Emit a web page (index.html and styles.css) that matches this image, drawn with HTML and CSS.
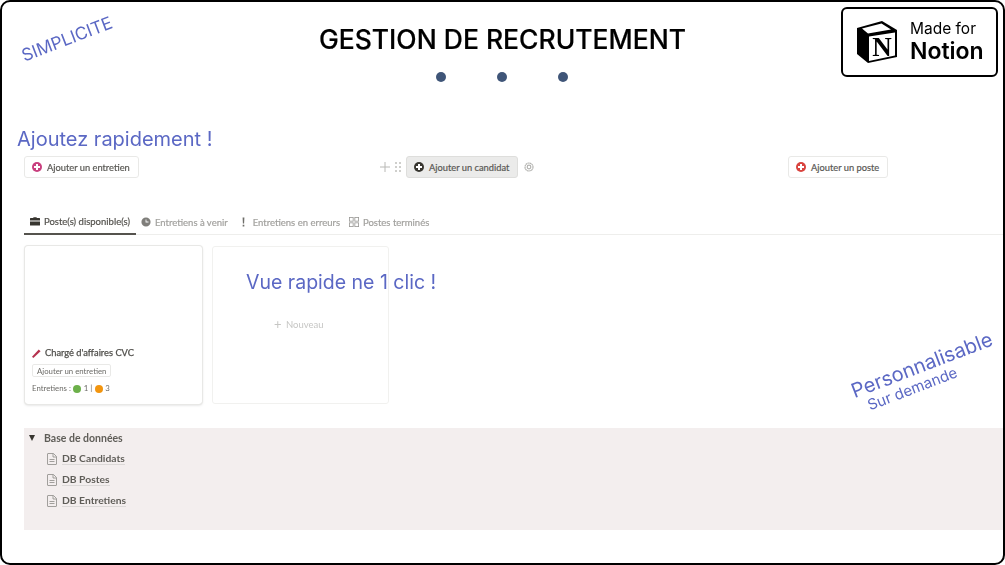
FILE: index.html
```html
<!DOCTYPE html>
<html lang="fr">
<head>
    <meta charset="UTF-8">
    <title>Gestion de recrutement</title>
    <link rel="stylesheet" href="styles.css">
</head>
<body>
    <div class="frame">
        <header class="header">
            <h1 class="title">GESTION DE RECRUTEMENT</h1>
            <div class="dots"><span></span><span></span><span></span></div>
        </header>

        <h2 class="lead">Ajoutez rapidement !</h2>

        <div class="actions">
            <div class="action"><span class="plus plus-pink"></span>Ajouter un entretien</div>
            <div class="action-group">
                <svg class="handle-plus" viewBox="0 0 10 10"><path d="M5 0v10M0 5h10"/></svg>
                <svg class="handle-grip" viewBox="0 0 6 10"><g><rect x="0" y="0" width="2" height="2"/><rect x="4" y="0" width="2" height="2"/><rect x="0" y="4" width="2" height="2"/><rect x="4" y="4" width="2" height="2"/><rect x="0" y="8" width="2" height="2"/><rect x="4" y="8" width="2" height="2"/></g></svg>
                <div class="action action-active"><span class="plus plus-dark"></span>Ajouter un candidat</div>
                <svg class="gear" viewBox="0 0 10 10"><circle cx="5" cy="5" r="4" stroke-dasharray="1.800 .300"/><circle cx="5" cy="5" r="1.800"/></svg>
            </div>
            <div class="action"><span class="plus plus-red"></span>Ajouter un poste</div>
        </div>

        <nav class="tabs">
            <div class="tab tab-active">
                <svg viewBox="0 0 12 11"><path d="M4 2V1h4v1h3.500a.5.5 0 0 1 .5.5V5H0V2.500A.5.5 0 0 1 .5 2zM0 6h12v4.500a.5.5 0 0 1-.5.5H.500a.5.5 0 0 1-.5-.5z"/></svg>
                Poste(s) disponible(s)
            </div>
            <div class="tab tab-next">
                <svg viewBox="0 0 12 12"><path fill-rule="evenodd" d="M6 .500a5.500 5.500 0 1 1 0 11 5.500 5.500 0 0 1 0-11zM5.500 3v3.500H9v-1H6.500V3z"/></svg>
                Entretiens à venir
            </div>
            <div class="tab">
                <svg class="tab-bang" viewBox="0 0 4 12"><path d="M.8 0h2.400l-.4 8H1.200zM.9 9.500h2.200V12H.900z"/></svg>
                Entretiens en erreurs
            </div>
            <div class="tab">
                <svg class="tab-grid" viewBox="0 0 12 12"><rect x=".5" y=".5" width="4.500" height="4.500"/><rect x="7" y=".5" width="4.500" height="4.500"/><rect x=".5" y="7" width="4.500" height="4.500"/><rect x="7" y="7" width="4.500" height="4.500"/></svg>
                Postes terminés
            </div>
        </nav>

        <section class="board">
            <article class="card">
                <div class="card-name">
                    <svg viewBox="0 0 10 10"><path d="M0 8.500 7.500.5l2 2L1.500 10z"/></svg>
                    Chargé d'affaires CVC
                </div>
                <div class="card-button">Ajouter un entretien</div>
                <div class="card-count">Entretiens : <i class="dot-green"></i> 1 | <i class="dot-orange"></i> 3</div>
            </article>
            <div class="card-new"><span class="new-plus">+</span> Nouveau</div>
        </section>

        <section class="database">
            <div class="db-title"><span class="caret"></span>Base de données</div>
            <div class="db-row">
                <svg viewBox="0 0 10 12"><path d="M1 .5h5.500L9.500 3.500V11a.5.5 0 0 1-.5.5H1a.5.5 0 0 1-.5-.5V1A.5.5 0 0 1 1 .5zM6 .8V4h3.300M2.500 6.500h5M2.500 8.500h5"/></svg>
                <span>DB Candidats</span>
            </div>
            <div class="db-row">
                <svg viewBox="0 0 10 12"><path d="M1 .5h5.500L9.500 3.500V11a.5.5 0 0 1-.5.5H1a.5.5 0 0 1-.5-.5V1A.5.5 0 0 1 1 .5zM6 .8V4h3.300M2.500 6.500h5M2.500 8.500h5"/></svg>
                <span>DB Postes</span>
            </div>
            <div class="db-row">
                <svg viewBox="0 0 10 12"><path d="M1 .5h5.500L9.500 3.500V11a.5.5 0 0 1-.5.5H1a.5.5 0 0 1-.5-.5V1A.5.5 0 0 1 1 .5zM6 .8V4h3.300M2.500 6.500h5M2.500 8.500h5"/></svg>
                <span>DB Entretiens</span>
            </div>
        </section>

        <!-- annotations posees sur la capture -->
        <div class="note note-simple">SIMPLICITE</div>
        <div class="note note-quick">Vue rapide ne 1 clic !</div>
        <div class="note note-custom">Personnalisable</div>
        <div class="note note-demand">Sur demande</div>

        <div class="badge">
            <svg class="badge-logo" viewBox="0 0 42 44">
                <path class="cube-dark" d="M1 8 26 1l15 9v27L12 43 1 34z"/>
                <path class="cube-light" d="M6 8.500 25.500 3.500l9.500 6L12 13.500zM13 16.500 39 12.500v23L13 41z"/>
                <text x="26" y="35.500" class="cube-letter">N</text>
            </svg>
            <div class="badge-text">
                <div class="badge-small">Made for</div>
                <div class="badge-big">Notion</div>
            </div>
        </div>
    </div>
</body>
</html>
```

FILE: styles.css
```css
* {
    margin: 0;
    padding: 0;
    box-sizing: border-box;
}

body {
    width: 1005px;
    height: 565px;
    overflow: hidden;
    background: white;
    font-family: 'Lato', 'Open Sans', sans-serif;
    color: #37352f;
}

.frame {
    position: relative;
    width: 1005px;
    height: 565px;
    border: 2px solid black;
    border-radius: 10px;
    overflow: hidden;
    padding-left: 22px;
    filter: blur(0.3px);
}

.header {
    height: 84px;
    padding-top: 19px;
    text-align: center;
    margin-left: -22px;
}

.title {
    font-family: 'Inter', sans-serif;
    font-size: 26.500px;
    font-weight: 500;
    line-height: 37px;
    -webkit-text-stroke: 0.2px;
    color: black;
}

.dots {
    display: flex;
    justify-content: center;
    gap: 51px;
    margin: 14px 0 0 -2px;
}

.dots span {
    width: 10px;
    height: 10px;
    border-radius: 50%;
    background: #3f5578;
}

.lead {
    margin-top: 40px;
    margin-left: -7px;
    font-family: 'Inter', sans-serif;
    font-size: 20px;
    font-weight: 400;
    line-height: 26px;
    color: #5b68c4;
}

.actions {
    display: grid;
    grid-template-columns: 356px 408px auto;
    margin-top: 4px;
    align-items: center;
    height: 22px;
}

.action {
    display: flex;
    align-items: center;
    gap: 5px;
    width: fit-content;
    height: 22px;
    padding: 0 8px 0 7px;
    border: 1px solid #e9e9e7;
    border-radius: 3px;
    font-size: 9.300px;
    -webkit-text-stroke: 0.2px;
    color: #5a5955;
    background: white;
}

.action-active {
    background: #ebebea;
    border-color: #dededc;
    margin-left: 5px;
}

.action-group {
    display: flex;
    align-items: center;
}

.handle-plus {
    width: 10px;
    height: 10px;
    fill: none;
    stroke: #b8b8b5;
    stroke-width: 1;
}

.handle-grip {
    width: 6px;
    height: 10px;
    margin-left: 5px;
    fill: #cfcfcc;
}

.gear {
    width: 10px;
    height: 10px;
    margin-left: 6px;
    fill: none;
    stroke: #b4b4b1;
    stroke-width: 1.200;
}

.plus {
    position: relative;
    width: 10px;
    height: 10px;
    border-radius: 50%;
}

.plus::before,
.plus::after {
    content: "";
    position: absolute;
    background: white;
}

.plus::before {
    left: 2px;
    top: 4px;
    width: 6px;
    height: 2px;
}

.plus::after {
    left: 4px;
    top: 2px;
    width: 2px;
    height: 6px;
}

.plus-pink { background: #c9407f; }
.plus-dark { background: #37352f; }
.plus-red { background: #d9443f; }

.tabs {
    display: flex;
    margin-top: 34px;
    height: 23px;
    border-bottom: 1px solid #eeeeec;
    gap: 4px;
}

.tab {
    display: flex;
    align-items: center;
    gap: 4px;
    height: 23px;
    padding: 0 2px 3px 3px;
    font-size: 9.500px;
    -webkit-text-stroke: 0.2px;
    color: #a2a19e;
}

.tab svg {
    width: 10px;
    height: 10px;
    fill: #7f7e7a;
}

.tab .tab-bang {
    width: 3px;
    margin: 0 4px 0 5px;
    fill: #6f6e6a;
}

.tab .tab-grid {
    fill: none;
    stroke: #9b9a97;
}

.tab-active {
    padding-left: 6px;
    padding-right: 6px;
    color: #55534e;
    border-bottom: 2px solid #55534e;
}

.tab-active svg {
    fill: #37352f;
}

.tab-next {
    padding-left: 1px;
}

.board {
    display: flex;
    gap: 10px;
    margin-top: 11px;
    height: 158px;
    padding-left: 1px;
}

.card {
    width: 177px;
    padding: 101px 7px 0;
    border-radius: 3px;
    box-shadow: 0 0 0 1px #e8e8e6, 0 1px 3px rgba(0, 0, 0, 0.18);
}

.card-name {
    display: flex;
    align-items: center;
    gap: 4px;
    font-size: 9.300px;
    -webkit-text-stroke: 0.25px;
    color: #4f4e4a;
    line-height: 12px;
}

.card-name svg {
    width: 9px;
    height: 9px;
    fill: #b5324e;
}

.card-button {
    width: fit-content;
    margin-top: 5px;
    padding: 0 4px;
    height: 13px;
    line-height: 12px;
    font-size: 7.800px;
    color: #6b6a66;
    border: 1px solid #e9e9e7;
    border-radius: 2px;
}

.card-count {
    display: flex;
    align-items: center;
    gap: 2.500px;
    margin-top: 6px;
    font-size: 7.800px;
    line-height: 11px;
    color: #6b6a66;
}

.card-count i {
    display: inline-block;
    width: 8px;
    height: 8px;
    border-radius: 50%;
}

.dot-green { background: #6cb04a; }
.dot-orange { background: #f2950f; }

.card-new {
    width: 177px;
    padding-top: 69px;
    padding-left: 61px;
    border: 1px solid #f1f1ef;
    border-radius: 3px;
    font-size: 9.500px;
    color: #c6c6c4;
}

.new-plus {
    font-size: 13px;
    margin-right: 2px;
    vertical-align: -1px;
}

.database {
    height: 102px;
    margin-top: 24px;
    padding: 4px 0 0 5px;
    background: #f3eeee;
}

.db-title {
    display: flex;
    align-items: center;
    height: 12px;
    font-size: 10.500px;
    font-weight: 700;
    color: #5f5d58;
}

.caret {
    width: 0;
    height: 0;
    margin-right: 9px;
    border-left: 3.500px solid transparent;
    border-right: 3.500px solid transparent;
    border-top: 6px solid #37352f;
}

.db-row {
    display: flex;
    align-items: center;
    gap: 5px;
    height: 21px;
    margin-left: 18px;
    font-size: 10.300px;
    font-weight: 700;
    color: #5f5d58;
}

.db-title + .db-row {
    margin-top: 4px;
}

.db-row svg {
    width: 10px;
    height: 12px;
    fill: none;
    stroke: #8b8a86;
    stroke-width: 0.800;
}

.db-row span {
    border-bottom: 1px solid #dcd9d8;
    line-height: 12px;
}

.note {
    position: absolute;
    font-family: 'Inter', sans-serif;
    color: #5b68c4;
    white-space: nowrap;
}

.note-simple {
    left: 17px;
    top: 26px;
    font-size: 17.300px;
    transform: rotate(-21deg);
}

.note-quick {
    left: 244px;
    top: 268px;
    font-size: 19.500px;
}

.note-custom {
    left: 845px;
    top: 351px;
    font-size: 20px;
    transform: rotate(-21deg);
}

.note-demand {
    left: 863px;
    top: 377px;
    font-size: 15px;
    transform: rotate(-21deg);
}

.badge {
    position: absolute;
    right: 5px;
    top: 5px;
    width: 157px;
    height: 70px;
    display: flex;
    align-items: center;
    gap: 12px;
    padding-left: 13px;
    border: 2px solid black;
    border-radius: 6px;
    background: white;
}

.badge-logo {
    width: 42px;
    height: 44px;
}

.cube-dark {
    fill: black;
}

.cube-light {
    fill: white;
}

.cube-letter {
    font-family: 'Liberation Serif', serif;
    font-size: 27px;
    font-weight: 700;
    text-anchor: middle;
    fill: black;
}

.badge-text {
    font-family: 'Inter', sans-serif;
    color: black;
}

.badge-small {
    font-size: 15.500px;
    line-height: 18px;
}

.badge-big {
    font-size: 23px;
    font-weight: 600;
    line-height: 26px;
}
```
